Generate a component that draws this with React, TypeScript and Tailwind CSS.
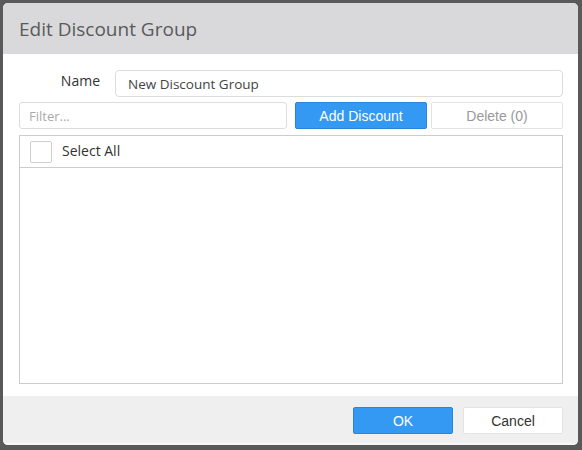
import React from "react";

const uiFont = { fontFamily: '"Open Sans", "Noto Sans", sans-serif' };
const btnFont = { fontFamily: '"Liberation Sans", Arial, sans-serif' };

function App() {
  return (
    <div className="w-[582px] h-[450px] bg-[#595959] pt-[3px] pl-[3px] pr-[4px] pb-[5px]">
      <div className="flex flex-col h-full rounded-[5px] bg-white overflow-hidden" style={uiFont}>
        <header className="h-[51px] shrink-0 bg-[#d9d9dc] pl-[16px] pt-[2px] flex items-center">
          <h2 className="text-[19px] text-[#5a5a5a]">Edit Discount Group</h2>
        </header>

        <div className="flex-1 pt-[16px] pl-[16px] pr-[15px]">
          <div className="flex items-center">
            <label className="w-[96px] pr-[15px] text-right text-[14px] text-[#333] -mt-[6px]">Name</label>
            <input
              className="flex-1 h-[27px] rounded-[4px] border border-[#dcdcdc] px-[12px] text-[13.5px] text-[#444] outline-none"
              defaultValue="New Discount Group"
            />
          </div>

          <div className="flex mt-[5px] h-[27px]">
            <input
              className="w-[268px] h-full rounded-[3px] border border-[#dcdcdc] px-[9px] text-[13px] text-[#444] placeholder:text-[#aaa] outline-none"
              placeholder="Filter..."
            />
            <button
              className="ml-[8px] w-[132px] h-full pt-[1px] rounded-[2px] border border-[#2a84d8] bg-[#3399f3] text-white text-[14px]"
              style={btnFont}
            >
              Add Discount
            </button>
            <button
              className="ml-[4px] w-[132px] h-full pt-[1px] rounded-[2px] border border-[#e3e3e3] bg-white text-[#999] text-[14px]"
              style={btnFont}
            >
              Delete (0)
            </button>
          </div>

          <div className="mt-[6px] h-[249px] border border-[#cccccc]">
            <div className="h-[32px] border-b border-[#cccccc] flex items-center pl-[10px]">
              <span className="w-[22px] h-[22px] border border-[#cfcfcf] rounded-[2px] bg-white" />
              <span className="ml-[10px] -mt-[2px] text-[14px] text-[#333]">Select All</span>
            </div>
          </div>
        </div>

        <footer className="h-[49px] shrink-0 bg-[#efefef] border-b-[2px] border-[#f7f7f7] flex justify-end items-start pt-[11px] pr-[15px] gap-[10px]">
          <button
            className="w-[100px] h-[27px] pt-[1px] rounded-[2px] border border-[#2a84d8] bg-[#3399f3] text-white text-[14px]"
            style={btnFont}
          >
            OK
          </button>
          <button
            className="w-[100px] h-[27px] pt-[1px] rounded-[2px] border border-[#e3e3e3] bg-white text-[#333] text-[14px]"
            style={btnFont}
          >
            Cancel
          </button>
        </footer>
      </div>
    </div>
  );
}

export default App;
